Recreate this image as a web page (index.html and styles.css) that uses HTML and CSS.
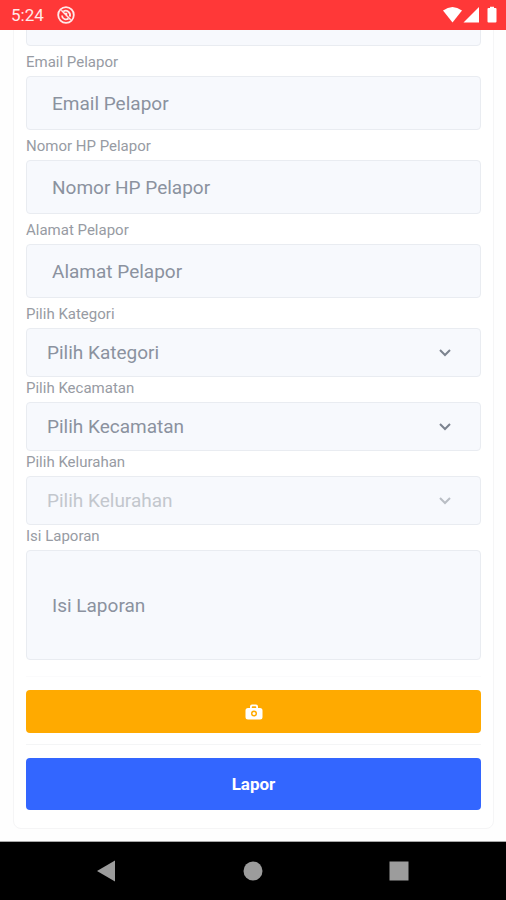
FILE: index.html
```html
<!DOCTYPE html>
<html lang="id">
<head>
<meta charset="utf-8">
<meta name="viewport" content="width=device-width, initial-scale=1">
<title>Lapor</title>
<link rel="stylesheet" href="styles.css">
</head>
<body>
<header class="status">
  <span>5:24</span>
  <svg class="status-app" viewBox="0 0 18 18" width="18" height="18" fill="none" stroke="currentColor" aria-hidden="true">
    <circle cx="9" cy="9" r="7.8" stroke-width="1.8"/>
    <path d="M5 9.5a4 4 0 0 0 6.5 3M6.3 5.4a4.4 4.4 0 0 1 6.5 5.2" stroke-width="1.8"/>
    <path d="M4.3 4.3l9.4 9.4M7 7.5h2.5v2.8" stroke-width="1.5"/>
  </svg>
  <svg class="status-signals" viewBox="0 0 56 18" width="56" height="18" fill="currentColor" aria-hidden="true">
    <path d="M1 4.600Q10.500-2.600 20 4.600L10.500 16.500Z"/>
    <path d="M37 1v15.500H21.500Z"/>
    <path d="M48 2V.800h4V2h1.500q1 0 1 1v12.500q0 1-1 1h-7q-1 0-1-1V3q0-1 1-1Z"/>
  </svg>
</header>
<main class="screen">
  <form class="card">
    <div class="field">
      <input class="control" id="nama" type="text" placeholder="Nama Pelapor" aria-label="Nama Pelapor">
    </div>
    <div class="field">
      <label class="label" for="email">Email Pelapor</label>
      <input class="control" id="email" type="email" placeholder="Email Pelapor">
    </div>
    <div class="field">
      <label class="label" for="hp">Nomor HP Pelapor</label>
      <input class="control" id="hp" type="tel" placeholder="Nomor HP Pelapor">
    </div>
    <div class="field">
      <label class="label" for="alamat">Alamat Pelapor</label>
      <input class="control" id="alamat" type="text" placeholder="Alamat Pelapor">
    </div>
    <div class="field">
      <label class="label" for="kategori">Pilih Kategori</label>
      <div class="picker">
        <select class="control" id="kategori"><option>Pilih Kategori</option></select>
        <svg class="chevron" viewBox="0 0 14 10" width="14" height="10" aria-hidden="true"><path d="M2 2l5 5 5-5"/></svg>
      </div>
    </div>
    <div class="field">
      <label class="label label-tight" for="kecamatan">Pilih Kecamatan</label>
      <div class="picker">
        <select class="control" id="kecamatan"><option>Pilih Kecamatan</option></select>
        <svg class="chevron" viewBox="0 0 14 10" width="14" height="10" aria-hidden="true"><path d="M2 2l5 5 5-5"/></svg>
      </div>
    </div>
    <div class="field">
      <label class="label label-tight" for="kelurahan">Pilih Kelurahan</label>
      <div class="picker picker-disabled">
        <select class="control" id="kelurahan" disabled><option>Pilih Kelurahan</option></select>
        <svg class="chevron" viewBox="0 0 14 10" width="14" height="10" aria-hidden="true"><path d="M2 2l5 5 5-5"/></svg>
      </div>
    </div>
    <div class="field">
      <label class="label label-tight" for="isi">Isi Laporan</label>
      <textarea class="control" id="isi" placeholder="Isi Laporan"></textarea>
    </div>
    <hr class="divider divider-top">
    <button class="button button-photo" type="button" aria-label="Ambil foto">
      <svg viewBox="0 0 18 16" width="18" height="16" aria-hidden="true">
        <path fill="currentColor" fill-rule="evenodd" d="M3 4h2V2.500Q5 .500 7 .500h4q2 0 2 2V4h2q2.500 0 2.500 2.500v6.500q0 2.500-2.500 2.500H3Q.500 15.500.500 13V6.500Q.500 4 3 4ZM6.800 4h4.400V3q0-.800-.800-.800H7.600q-.800 0-.800.800ZM9 6.500a3 3 0 1 0 0 6 3 3 0 0 0 0-6Z"/>
        <circle cx="9" cy="9.500" r="1.500" fill="currentColor"/>
      </svg>
    </button>
    <hr class="divider">
    <button class="button button-send" type="submit">Lapor</button>
  </form>
</main>
<nav class="navbar" aria-label="Navigasi sistem">
  <button class="nav-button" type="button" aria-label="Kembali"><svg viewBox="0 0 22 22" width="22" height="22"><path d="M19 .500v21L1 11Z"/></svg></button>
  <button class="nav-button" type="button" aria-label="Beranda"><svg viewBox="0 0 22 22" width="22" height="22"><circle cx="11" cy="11" r="9.500"/></svg></button>
  <button class="nav-button" type="button" aria-label="Terkini"><svg viewBox="0 0 22 22" width="22" height="22"><path d="M1.500 1.500h19v19h-19Z"/></svg></button>
</nav>
</body>
</html>
```
FILE: styles.css
```css
* {
  box-sizing: border-box;
}

body {
  margin: 0;
  height: 100vh;
  display: flex;
  flex-direction: column;
  background: #fefefe;
  font-family: Roboto, "Liberation Sans", sans-serif;
}

.status {
  flex: none;
  display: flex;
  align-items: center;
  height: 30px;
  padding: 0 8px 0 11px;
  background: #ff3838;
  color: #ffeaea;
  font-size: 17px;
}

.status-app {
  margin-left: 13px;
}

.status-signals {
  margin-left: auto;
  color: #fff;
}

.screen {
  flex: 1;
  min-height: 0;
  overflow: hidden;
}

/* The form is scrolled past its first field. */
.card {
  margin: -51px 12px 0 13px;
  padding: 12px;
  border: 1px solid #f5f5f6;
  border-radius: 8px;
  background: #fff;
}

.label {
  display: block;
  height: 30px;
  line-height: 32px;
  font-size: 15px;
  color: #979ba3;
}

.label-tight {
  height: 25px;
  line-height: 22px;
}

.control {
  display: block;
  width: 100%;
  height: 54px;
  margin: 0;
  padding: 0 25px;
  border: 1px solid #e9ecf1;
  border-radius: 4px;
  background: #f7f9fd;
  color: #8b929f;
  font: 19px/24px Roboto, "Liberation Sans", sans-serif;
}

.control::placeholder {
  color: #8b929f;
  opacity: 1;
}

.picker {
  position: relative;
}

.picker .control {
  appearance: none;
  height: 49px;
  padding: 0 50px 0 20px;
  opacity: 1;
}

.picker-disabled .control {
  color: #c3c7cd;
}

.chevron {
  position: absolute;
  top: 20px;
  right: 29px;
  fill: none;
  stroke: #7c838f;
  stroke-width: 2;
  pointer-events: none;
}

.picker-disabled .chevron {
  stroke: #b9bdc4;
}

textarea.control {
  height: 110px;
  padding: 43px 25px;
  resize: none;
  overflow: hidden;
}

.divider {
  height: 1px;
  margin: 11px 0 13px;
  border: 0;
  background: #f4f5f6;
}

.divider-top {
  margin: 16px 0 13px;
  background: #fbfbfc;
}

.button {
  display: flex;
  align-items: center;
  justify-content: center;
  width: 100%;
  padding: 0;
  border: 0;
  border-radius: 4px;
  color: #fff;
  font: 700 17px/20px Roboto, "Liberation Sans", sans-serif;
}

.button-photo {
  height: 43px;
  background: #ffaa00;
}

.button-send {
  height: 52px;
  margin-bottom: 6px;
  background: #3366ff;
}

.navbar {
  flex: none;
  display: flex;
  justify-content: center;
  gap: 124px;
  height: 59px;
  border-top: 1px solid #a8a8a8;
  background: #000;
}

.nav-button {
  display: flex;
  align-items: center;
  padding: 0;
  border: 0;
  background: none;
  fill: #9c9c9c;
}
```
